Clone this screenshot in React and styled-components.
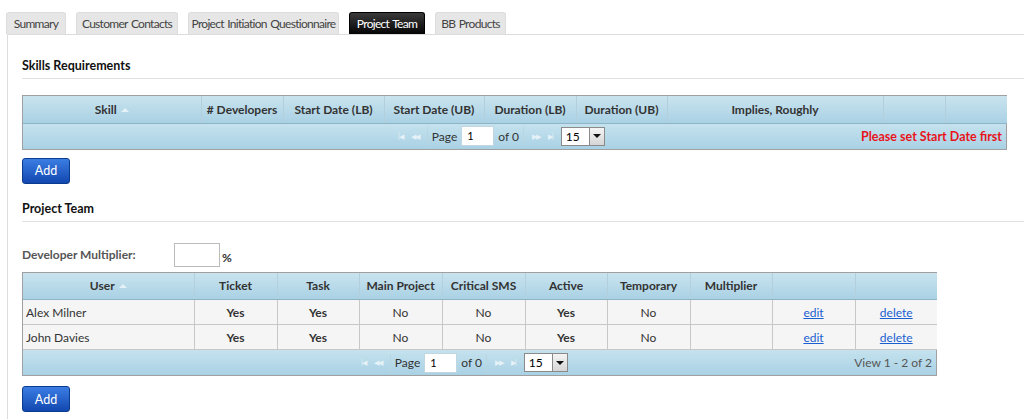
import React from "react";
import styled, { createGlobalStyle, css } from "styled-components";

const Global = createGlobalStyle`
  html, body { margin: 0; padding: 0; background: #fff; }
  body { font-family: Lato, "Open Sans", sans-serif; font-size: 12px; color: #333; }
  * { box-sizing: border-box; }
`;

const Page = styled.div`
  width: 1024px;
  height: 419px;
  overflow: hidden;
  padding: 11px 0 0 6px;
`;

const Tabs = styled.div`
  display: flex;
  gap: 10px;
  height: 23px;
  align-items: flex-end;
`;

const Tab = styled.div`
  height: 22px;
  width: ${p => p.$w}px;
  display: flex;
  align-items: center;
  justify-content: center;
  white-space: nowrap;
  border-radius: 3px 3px 0 0;
  font-size: 12px;
  letter-spacing: -0.7px;
  word-spacing: 1px;
  background: ${p => (p.$active ? "linear-gradient(#3a3a3a, #050505)" : "#e6e6e6")};
  color: ${p => (p.$active ? "#fff" : "#444")};
  border: 1px solid ${p => (p.$active ? "#000" : "#dcdcdc")};
  border-bottom: none;
`;

const Panel = styled.div`
  border-top: 1px solid #ddd;
  border-left: 1px solid #ddd;
  margin-left: 1px;
  padding: 0 0 20px 14px;
  height: 400px;
`;

const SectionTitle = styled.div`
  font-weight: bold;
  font-size: 12.5px;
  color: #111;
  padding-top: ${p => p.$top}px;
  padding-bottom: 5px;
  border-bottom: 1px solid #e2e2e2;
`;

const GridBox = styled.div`
  width: ${p => p.$w}px;
  margin-top: ${p => p.$mt}px;
  border: 1px solid #a0a0a0;
`;

const Table = styled.table`
  border-collapse: collapse;
  width: 100%;
  table-layout: fixed;
`;

const Th = styled.th`
  height: 27px;
  padding: 0 4px;
  font-weight: bold;
  font-size: 12px;
  color: #333;
  text-align: center;
  background: linear-gradient(#c9e3ee, #a9d1e4);
  border-right: 1px solid #b4cfdc;
  border-bottom: 1px solid #8fb4c6;
  white-space: nowrap;
  &:last-child { border-right: none; }
`;

const Td = styled.td`
  height: 25px;
  padding: 0 3px;
  background: #f5f5f5;
  border-right: 1px solid #c8c8c8;
  border-bottom: 1px solid #c8c8c8;
  text-align: ${p => (p.$left ? "left" : "center")};
  font-weight: ${p => (p.$bold ? "bold" : "normal")};
  color: #333;
  &:last-child { border-right: none; }
`;

const LinkText = styled.a`
  color: #1a5fd0;
  text-decoration: underline;
  cursor: pointer;
`;

const SortIcon = styled.span`
  display: inline-block;
  width: 0;
  height: 0;
  margin-left: 4px;
  vertical-align: 2px;
  border-left: 4px solid transparent;
  border-right: 4px solid transparent;
  border-bottom: 4px solid #e4f1f7;
`;

const Pager = styled.div`
  height: 25px;
  display: flex;
  align-items: center;
  background: linear-gradient(#c5e2ee, #a9d1e4);
  position: relative;
`;

const PagerCenter = styled.div`
  position: absolute;
  left: ${p => p.$left}px;
  top: 0;
  height: 100%;
  display: flex;
  align-items: center;
`;

const NavIcon = styled.span`
  font-size: 7px;
  color: #e6f2f7;
  letter-spacing: -1px;
  margin: 0 4px;
`;

const Sep = styled.span`
  width: 1px;
  height: 18px;
  background: #b8d5e2;
  margin: 0 4px;
`;

const PageInput = styled.div`
  width: 33px;
  height: 20px;
  background: #fff;
  border: 1px solid #c0d7e2;
  margin: 0 4px;
  font-size: 11px;
  padding: 2px 0 0 5px;
  color: #000;
`;

const Select = styled.div`
  display: flex;
  width: 44px;
  height: 19px;
  border: 1px solid #8a8a8a;
  background: #fff;
  margin-left: 4px;
`;

const SelectVal = styled.div`
  flex: 1;
  padding: 1px 0 0 4px;
  font-size: 12px;
  color: #000;
`;

const SelectBtn = styled.div`
  width: 15px;
  background: linear-gradient(#f4f4f4, #d6d6d6);
  border-left: 1px solid #8a8a8a;
  display: flex;
  align-items: center;
  justify-content: center;
  &::after {
    content: "";
    border-left: 4px solid transparent;
    border-right: 4px solid transparent;
    border-top: 4px solid #111;
  }
`;

const PagerRight = styled.div`
  margin-left: auto;
  padding-right: 4px;
  ${p =>
    p.$error
      ? css`color: #e8141c; font-weight: bold; font-size: 12.5px;`
      : css`color: #555; font-size: 12px;`}
`;

const AddButton = styled.button`
  display: block;
  margin-top: ${p => p.$mt}px;
  width: 48px;
  height: 26px;
  border: 1px solid #0b3b8c;
  border-radius: 3px;
  background: linear-gradient(#3b7ee3, #1247b0);
  color: #fff;
  font-family: inherit;
  font-size: 12.5px;
  padding: 0;
`;

const MultRow = styled.div`
  display: flex;
  align-items: center;
  margin-top: 21px;
  height: 24px;
`;

const MultLabel = styled.span`
  width: 152px;
  font-weight: bold;
  color: #555;
`;

const MultInput = styled.div`
  width: 46px;
  height: 24px;
  border: 1px solid #bbb;
  background: #fff;
`;

const Pct = styled.span`
  font-weight: bold;
  margin-left: 2px;
  margin-top: 6px;
`;

function PagerNav() {
  return (
    <>
      <NavIcon>|◀</NavIcon>
      <NavIcon>◀◀</NavIcon>
      <Sep />
      <span>Page</span>
      <PageInput>1</PageInput>
      <span>of 0</span>
      <Sep />
      <NavIcon>▶▶</NavIcon>
      <NavIcon>▶|</NavIcon>
      <Select>
        <SelectVal>15</SelectVal>
        <SelectBtn />
      </Select>
    </>
  );
}

const skillCols = [
  ["Skill", 178, true],
  ["# Developers", 82],
  ["Start Date (LB)", 101],
  ["Start Date (UB)", 100],
  ["Duration (LB)", 92],
  ["Duration (UB)", 91],
  ["Implies, Roughly", 216],
  ["", 62],
  ["", 62],
];

const teamCols = [
  ["User", 171, true],
  ["Ticket", 83],
  ["Task", 82],
  ["Main Project", 83],
  ["Critical SMS", 83],
  ["Active", 82],
  ["Temporary", 83],
  ["Multiplier", 82],
  ["", 83],
  ["", 82],
];

const team = [
  ["Alex Milner", "Yes", "Yes", "No", "No", "Yes", "No"],
  ["John Davies", "Yes", "Yes", "No", "No", "Yes", "No"],
];

const tabs = [
  ["Summary", 60],
  ["Customer Contacts", 102],
  ["Project Initiation Questionnaire", 151],
  ["Project Team", 76, true],
  ["BB Products", 71],
];

export default function App() {
  return (
    <Page>
      <Global />
      <Tabs>
        {tabs.map(([t, w, a]) => (
          <Tab key={t} $w={w} $active={a}>
            {t}
          </Tab>
        ))}
      </Tabs>
      <Panel>
        <SectionTitle $top={23}>Skills Requirements</SectionTitle>
        <GridBox $w={985} $mt={16}>
          <Table>
            <colgroup>
              {skillCols.map((c, i) => (
                <col key={i} style={{ width: c[1] }} />
              ))}
            </colgroup>
            <thead>
              <tr>
                {skillCols.map((c, i) => (
                  <Th key={i}>
                    {c[0]}
                    {c[2] && <SortIcon />}
                  </Th>
                ))}
              </tr>
            </thead>
          </Table>
          <Pager>
            <PagerCenter $left={371}>
              <PagerNav />
            </PagerCenter>
            <PagerRight $error>Please set Start Date first</PagerRight>
          </Pager>
        </GridBox>
        <AddButton $mt={8}>Add</AddButton>
        <SectionTitle $top={17}>Project Team</SectionTitle>
        <MultRow>
          <MultLabel>Developer Multiplier:</MultLabel>
          <MultInput />
          <Pct>%</Pct>
        </MultRow>
        <GridBox $w={915} $mt={5}>
          <Table>
            <colgroup>
              {teamCols.map((c, i) => (
                <col key={i} style={{ width: c[1] }} />
              ))}
            </colgroup>
            <thead>
              <tr>
                {teamCols.map((c, i) => (
                  <Th key={i}>
                    {c[0]}
                    {c[2] && <SortIcon />}
                  </Th>
                ))}
              </tr>
            </thead>
            <tbody>
              {team.map((r, i) => (
                <tr key={i}>
                  <Td $left>{r[0]}</Td>
                  <Td $bold>{r[1]}</Td>
                  <Td $bold>{r[2]}</Td>
                  <Td>{r[3]}</Td>
                  <Td>{r[4]}</Td>
                  <Td $bold>{r[5]}</Td>
                  <Td>{r[6]}</Td>
                  <Td />
                  <Td>
                    <LinkText>edit</LinkText>
                  </Td>
                  <Td>
                    <LinkText>delete</LinkText>
                  </Td>
                </tr>
              ))}
            </tbody>
          </Table>
          <Pager>
            <PagerCenter $left={334}>
              <PagerNav />
            </PagerCenter>
            <PagerRight>View 1 - 2 of 2</PagerRight>
          </Pager>
        </GridBox>
        <AddButton $mt={10}>Add</AddButton>
      </Panel>
    </Page>
  );
}
